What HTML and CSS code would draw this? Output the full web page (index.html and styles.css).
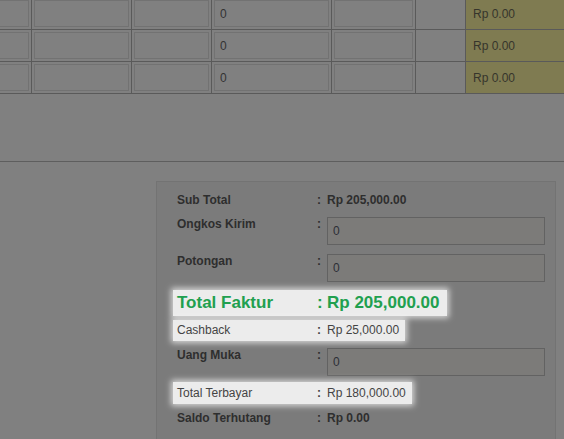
FILE: index.html
```html
<!DOCTYPE html>
<html lang="id">
<head>
<meta charset="utf-8">
<title>Faktur</title>
<link rel="stylesheet" href="styles.css">
</head>
<body>
<div class="page">
  <div class="items">
    <div class="trow">
      <div class="cell"><input class="field" type="text" value=""></div>
      <div class="cell"><input class="field" type="text" value=""></div>
      <div class="cell"><input class="field" type="text" value=""></div>
      <div class="cell"><input class="field" type="text" value="0"></div>
      <div class="cell"><input class="field" type="text" value=""></div>
      <div class="cell"></div>
      <div class="cell total">Rp 0.00</div>
    </div>
    <div class="trow">
      <div class="cell"><input class="field" type="text" value=""></div>
      <div class="cell"><input class="field" type="text" value=""></div>
      <div class="cell"><input class="field" type="text" value=""></div>
      <div class="cell"><input class="field" type="text" value="0"></div>
      <div class="cell"><input class="field" type="text" value=""></div>
      <div class="cell"></div>
      <div class="cell total">Rp 0.00</div>
    </div>
    <div class="trow">
      <div class="cell"><input class="field" type="text" value=""></div>
      <div class="cell"><input class="field" type="text" value=""></div>
      <div class="cell"><input class="field" type="text" value=""></div>
      <div class="cell"><input class="field" type="text" value="0"></div>
      <div class="cell"><input class="field" type="text" value=""></div>
      <div class="cell"></div>
      <div class="cell total">Rp 0.00</div>
    </div>
  </div>
  <div class="items-foot"></div>

  <div class="summary-wrap">
    <div class="summary">
      <div class="srow text r-sub">
        <span class="lbl">Sub Total</span><span class="colon">:</span><span class="val">Rp 205,000.00</span>
      </div>
      <div class="srow r-ongkos">
        <span class="lbl">Ongkos Kirim</span><span class="colon">:</span><input class="sinput" type="text" value="0">
      </div>
      <div class="srow r-potongan">
        <span class="lbl">Potongan</span><span class="colon">:</span><input class="sinput" type="text" value="0">
      </div>
      <div class="srow hl big r-faktur">
        <span class="lbl">Total Faktur</span><span class="colon">:</span><span class="val">Rp 205,000.00</span>
      </div>
      <div class="srow hl plain r-cashback">
        <span class="lbl">Cashback</span><span class="colon">:</span><span class="val">Rp 25,000.00</span>
      </div>
      <div class="srow r-uang">
        <span class="lbl">Uang Muka</span><span class="colon">:</span><input class="sinput" type="text" value="0">
      </div>
      <div class="srow hl plain r-terbayar">
        <span class="lbl">Total Terbayar</span><span class="colon">:</span><span class="val">Rp 180,000.00</span>
      </div>
      <div class="srow text r-saldo">
        <span class="lbl">Saldo Terhutang</span><span class="colon">:</span><span class="val">Rp 0.00</span>
      </div>
    </div>
  </div>
</div>
</body>
</html>
```

FILE: styles.css
```css
* { box-sizing: border-box; }

html, body {
  margin: 0;
  padding: 0;
  background: #808080;
  overflow: hidden;
}

body {
  font-family: "Liberation Sans", Arial, sans-serif;
  font-size: 12px;
  color: #2e2e2e;
}

.page {
  width: 564px;
}

/* ---------- item table ---------- */
.items {
  margin-top: -2px;
  margin-left: -69px;
}

.trow {
  display: grid;
  grid-template-columns: 101px 100px 80px 120px 84px 50px 120px;
  height: 32px;
  border-bottom: 1px solid #5a5a5a;
}

.cell {
  border-right: 1px solid #5a5a5a;
  padding: 2px 2px;
  display: flex;
  align-items: center;
}

.cell:last-child { border-right: 0; }

.field {
  display: block;
  width: 100%;
  height: 27px;
  margin: 0;
  border: 1px solid #727272;
  background: #808080;
  font-family: "Liberation Sans", Arial, sans-serif;
  font-size: 12px;
  color: #333333;
  padding: 0 5px;
  outline: none;
}

.total {
  background: #7f7b51;
  padding-left: 7px;
  color: #36352c;
}

.items-foot {
  height: 68px;
  border-bottom: 1px solid #5e5e5e;
}

/* ---------- summary ---------- */
.summary-wrap {
  display: flex;
  justify-content: flex-end;
  padding-right: 8px;
  margin-top: 19px;
}

.summary {
  width: 400px;
  background: #7b7b7b;
  border: 1px solid #737373;
  padding: 8px 16px 40px;
  display: flex;
  flex-direction: column;
  align-items: flex-start;
}

.srow {
  display: grid;
  grid-template-columns: 140px 10px auto;
  align-items: start;
  padding: 0 4px;
  line-height: 15px;
  font-weight: bold;
  color: #2e2e2e;
}

.srow.text { line-height: 18px; }

.colon { font-weight: bold; }

.sinput {
  width: 218px;
  height: 28px;
  margin: 0;
  border: 1px solid #626262;
  background: #7c7b79;
  font-family: "Liberation Sans", Arial, sans-serif;
  font-size: 12px;
  font-weight: normal;
  color: #2c2f36;
  padding: 0 5px;
  outline: none;
}

.hl {
  background: #ececec;
  box-shadow: 0 0 6px 2px rgba(255, 255, 255, 0.7);
  padding-right: 6px;
}

.hl.big {
  font-size: 17px;
  line-height: 26px;
  color: #21a04f;
  padding-right: 8px;
}

.hl.plain {
  font-weight: normal;
  color: #444444;
}

.hl.plain .colon { font-weight: bold; }

.r-cashback { line-height: 21px; }
.r-terbayar { line-height: 22px; }

.r-sub      { margin-top: 1px; }
.r-ongkos   { margin-top: 8px; }
.r-potongan { margin-top: 9px; }
.r-faktur   { margin-top: 8px; }
.r-cashback { margin-top: 4px; }
.r-uang     { margin-top: 7px; }
.r-terbayar { margin-top: 6px; }
.r-saldo    { margin-top: 5px; }
```
